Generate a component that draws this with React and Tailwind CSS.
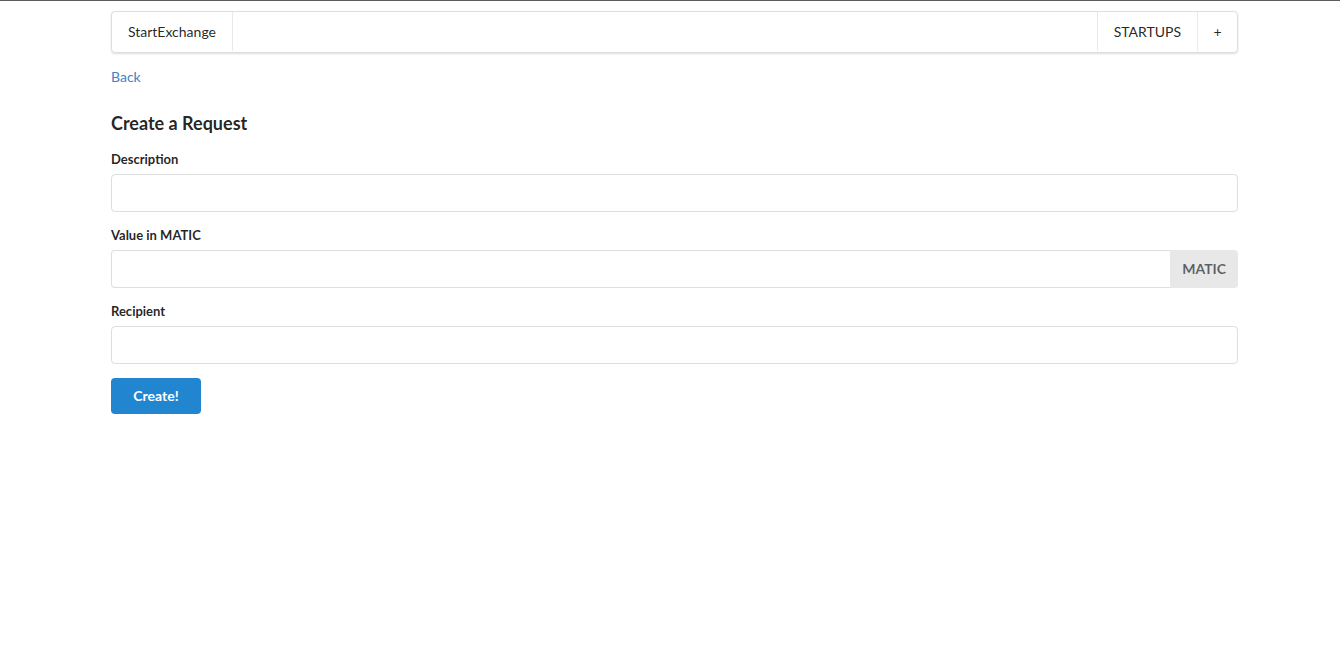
export default function App() {
  const font = { fontFamily: "Lato, 'Helvetica Neue', Arial, sans-serif" };
  return (
    <div className="min-h-[656px] bg-white text-[14px] text-[rgba(0,0,0,0.87)]" style={font}>
      <div className="h-px bg-[#5c5c5c]" />
      <div className="ml-[111px] w-[1127px] pt-[10px]">
        <div className="flex h-[42px] items-stretch rounded-[4px] border border-[rgba(34,36,38,0.15)] pb-px shadow-[0_1px_2px_0_rgba(34,36,38,0.15)]">
          <div className="flex items-center border-r border-[rgba(34,36,38,0.1)] px-[16px]">StartExchange</div>
          <div className="flex-1" />
          <div className="flex items-center border-l border-[rgba(34,36,38,0.1)] px-[16px]">STARTUPS</div>
          <div className="flex w-[40px] items-center justify-center border-l border-[rgba(34,36,38,0.1)]">+</div>
        </div>
        <div className="mt-[14px] leading-[20px]">
          <a className="text-[#4183c4]">Back</a>
        </div>
        <h3 className="mt-[25px] text-[18px] font-bold leading-[23px]">Create a Request</h3>
        <form>
          <label className="mt-[15px] mb-[5px] block text-[13px] font-bold leading-[19px]">Description</label>
          <input className="block h-[38px] w-full rounded-[4px] border border-[rgba(34,36,38,0.15)] px-[14px] outline-none" />
          <label className="mt-[14px] mb-[5px] block text-[13px] font-bold leading-[19px]">Value in MATIC</label>
          <div className="flex h-[38px]">
            <input className="block h-full flex-1 rounded-l-[4px] border border-r-0 border-[rgba(34,36,38,0.15)] px-[14px] outline-none" />
            <div className="flex items-center rounded-r-[4px] bg-[#e8e8e8] px-[12px] pb-px font-bold text-[rgba(0,0,0,0.6)]">MATIC</div>
          </div>
          <label className="mt-[14px] mb-[5px] block text-[13px] font-bold leading-[19px]">Recipient</label>
          <input className="block h-[38px] w-full rounded-[4px] border border-[rgba(34,36,38,0.15)] px-[14px] outline-none" />
          <button type="button" className="mt-[14px] h-[36px] w-[90px] rounded-[4px] bg-[#2185d0] pb-[2px] font-bold text-white">Create!</button>
        </form>
      </div>
    </div>
  );
}
